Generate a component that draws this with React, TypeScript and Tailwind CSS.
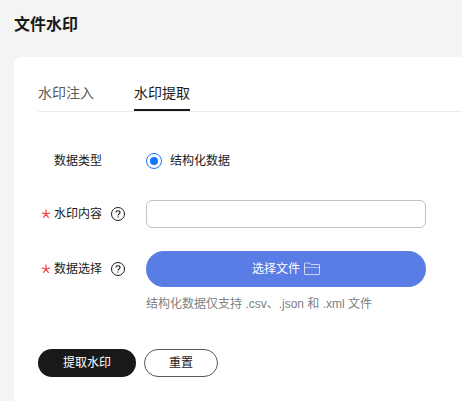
import type { ReactNode } from 'react';

function HelpIcon() {
  return (
    <svg className="ml-2 w-4 h-4 shrink-0" viewBox="0 0 16 16" fill="none" stroke="#191919">
      <circle cx="8" cy="8" r="6.5" strokeWidth="1" />
      <path d="M6 6.6C6 5.4 6.9 4.7 8 4.7s2 .7 2 1.8c0 1.3-2 1.5-2 3" strokeWidth="1.15" />
      <path d="M8 10.4v1.2" strokeWidth="1.2" />
    </svg>
  );
}

function RequiredIcon() {
  return (
    <svg className="w-2 h-2 mr-1 shrink-0 overflow-visible" viewBox="0 0 8 8" fill="none" stroke="#f5484c" strokeWidth="1.25">
      <path d="M4-.4v4.4M4 4L0 2.8M4 4l4-1.2M4 4L1.4 7.8M4 4l2.6 3.8" />
    </svg>
  );
}

function FolderIcon() {
  return (
    <svg className="ml-1 w-4 h-4" viewBox="0 0 16 16" fill="none" stroke="#fff">
      <path d="M.5 13V2.5q0-.5.5-.5h4.6l1.4 1.5h8q.5 0 .5.5v9q0 .5-.5.5H1q-.5 0-.5-.5z" strokeWidth=".7" />
      <path d="M.5 6.5h15" strokeWidth=".5" />
    </svg>
  );
}

function Label({ children, required, help }: { children: ReactNode; required?: boolean; help?: boolean }) {
  return (
    <div className="w-[108px] flex items-center pl-1 shrink-0">
      {required ? <RequiredIcon /> : <span className="w-3" />}
      <span>{children}</span>
      {help && <HelpIcon />}
    </div>
  );
}

export default function App() {
  return (
    <div className="w-full h-screen overflow-hidden flex flex-col bg-[#f4f4f4] pl-3.5 text-xs text-[#191919] font-['Liberation_Sans','Noto_Sans_CJK_SC',sans-serif]">
      <h1 className="h-[57px] shrink-0 pt-[13px] text-base leading-6 font-bold">文件水印</h1>

      <main className="flex-1 bg-white rounded-tl-lg pl-6 pt-[19px]">
        <nav className="flex gap-10 h-9 border-b border-[#ebebeb] text-sm leading-[34px]">
          <button className="h-[35px] border-b-2 border-transparent text-[#595959]">水印注入</button>
          <button className="h-[35px] border-b-2 border-[#191919]">水印提取</button>
        </nav>

        <form>
          <div className="flex items-center h-7 mt-[35px]">
            <Label>数据类型</Label>
            <label className="flex items-center gap-2">
              <span className="w-4 h-4 rounded-full border border-[#1476ff] flex items-center justify-center">
                <span className="w-2 h-2 rounded-full bg-[#1476ff]" />
              </span>
              结构化数据
            </label>
          </div>

          <div className="flex items-center h-7 mt-[25px]">
            <Label required help>水印内容</Label>
            <input className="w-[280px] h-7 rounded-md border border-[#c2c2c2] px-2 outline-none" />
          </div>

          <div className="flex items-center h-9 mt-[23px]">
            <Label required help>数据选择</Label>
            <button type="button" className="w-[280px] h-9 rounded-full bg-[#5a7ce5] text-white flex items-center justify-center">
              选择文件
              <FolderIcon />
            </button>
          </div>
          <p className="ml-[108px] mt-2 leading-[18px] text-[#808080]">结构化数据仅支持 .csv、.json 和 .xml 文件</p>

          <div className="flex gap-2 mt-9">
            <button type="button" className="w-[98px] h-7 rounded-full bg-[#191919] text-white">提取水印</button>
            <button type="button" className="w-[74px] h-7 rounded-full border border-[#595959]">重置</button>
          </div>
        </form>
      </main>
    </div>
  );
}
